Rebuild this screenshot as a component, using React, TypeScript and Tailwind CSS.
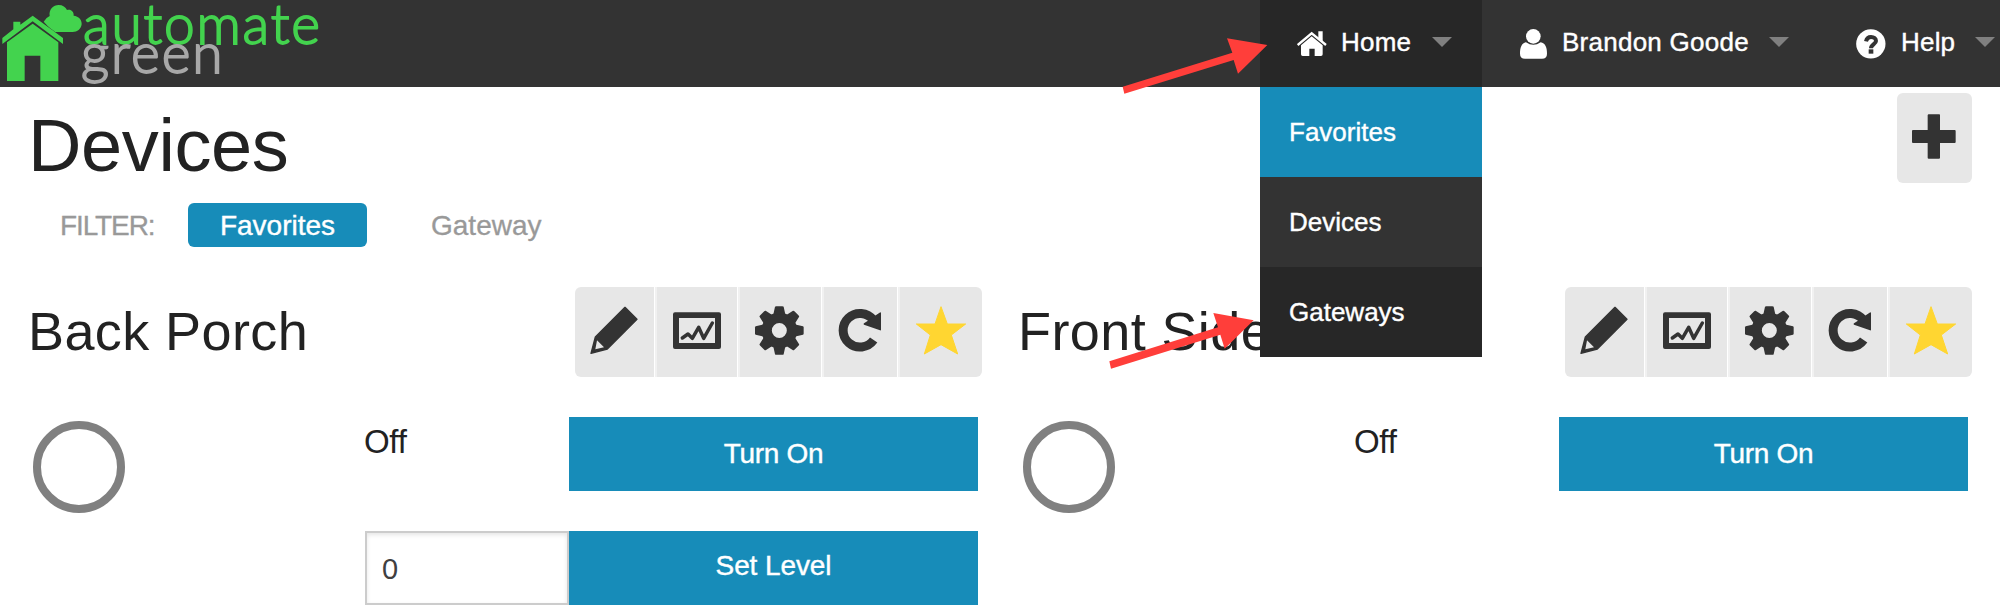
import type { ReactNode } from "react";

function Caret() {
  return (
    <svg className="block h-[10px] w-5 shrink-0" viewBox="0 0 20 10">
      <path d="M0 0H20L10 10Z" fill="#808080" />
    </svg>
  );
}

function Logo() {
  return (
    <div className="flex h-[87px] w-[360px] shrink-0">
      <svg className="block h-[87px] w-[82px] shrink-0" viewBox="0 0 246 261" fill="#43d34e">
        <path d="M160 96L131 65Q136 54 149 48C146 28 160 15 176 15C188 15 197 21 201 30C212 26 222 34 221 47C236 49 246 59 245 73C243 88 232 96 218 96Z" />
        <path
          d="M7 114L40 88V65H61V74L98 47L189 114V132L98 64L7 132Z"
          stroke="#333"
          strokeWidth="2"
          paintOrder="stroke"
        />
        <path d="M98 71L175 127V243H121V167H74V243H21V127Z" />
      </svg>
      <div className="flex flex-col whitespace-nowrap font-[Lato,sans-serif] font-light">
        <span className="ml-[1px] mt-[-7px] h-[38px] text-[55px] leading-[60px] tracking-[1.8px] text-[#43d34e] [-webkit-text-stroke:1.8px_#43d34e]">
          automate
        </span>
        <span className="ml-[-1px] mt-[-9px] text-[55px] leading-[60px] tracking-[2px] text-[#a8a8a8] [-webkit-text-stroke:1.8px_#a8a8a8]">
          green
        </span>
      </div>
    </div>
  );
}

function HomeIcon() {
  return (
    <svg className="block h-[26px] w-[30px]" viewBox="591 90 90 78" fill="#fff">
      <path d="M593 132L635 97L678 132" fill="none" stroke="#fff" strokeWidth="7" />
      <path d="M655 91H668V122L655 111Z" />
      <path d="M603 133L635 106L668 133V160Q668 165 663 165H644V143H628V165H608Q603 165 603 160Z" />
    </svg>
  );
}

function UserIcon() {
  return (
    <svg className="block h-[30px] w-[27px]" viewBox="60 84 81 90" fill="#fff">
      <circle cx="100" cy="106" r="22" />
      <path d="M78 124Q100 139 122 124C136 126 141 140 141 158Q141 173 126 173H75Q60 173 60 158C60 140 65 126 78 124Z" />
    </svg>
  );
}

function HelpIcon() {
  return (
    <svg className="block h-[30px] w-[30px]" viewBox="1067 84 90 90">
      <circle cx="1111.500" cy="128.500" r="44" fill="#fff" />
      <path
        d="M1097 121C1099 112 1104 108 1112 108C1121 108 1127 113 1127 120C1127 129 1112 130 1112 142"
        fill="none"
        stroke="#333"
        strokeWidth="12"
      />
      <path d="M1105 145H1119V158H1105Z" fill="#333" />
    </svg>
  );
}

function MenuItem({ tone, children }: { tone: string; children: ReactNode }) {
  return (
    <a className={`flex h-[90px] items-center pl-[29px] text-[26px] text-white ${tone}`}>{children}</a>
  );
}

function Header() {
  return (
    <header className="flex h-[87px] bg-[#333] text-[26px] text-white">
      <Logo />
      <nav className="ml-[900px] flex h-[87px] whitespace-nowrap [-webkit-text-stroke:0.4px_#fff]">
        <div className="relative flex h-[87px] w-[222px] items-center bg-[#272727] pl-[37px]">
          <HomeIcon />
          <span className="ml-[14px] w-[91px] pb-[3px] tracking-[0.2px]">Home</span>
          <div className="pb-[3px]">
            <Caret />
          </div>
          <div className="absolute left-0 top-[87px] z-10 w-[222px]">
            <MenuItem tone="bg-[#178cb9]">Favorites</MenuItem>
            <MenuItem tone="bg-[#333]">Devices</MenuItem>
            <MenuItem tone="bg-[#272727]">Gateways</MenuItem>
          </div>
        </div>
        <div className="flex h-[87px] items-center pl-[38px]">
          <UserIcon />
          <span className="ml-[15px] w-[207px] pb-[3px] tracking-[0.25px]">Brandon Goode</span>
          <div className="pb-[3px]">
            <Caret />
          </div>
        </div>
        <div className="flex h-[87px] items-center pl-[67px]">
          <HelpIcon />
          <span className="ml-[15px] w-[74px] pb-[3px] tracking-[0.2px]">Help</span>
          <div className="pb-[3px]">
            <Caret />
          </div>
        </div>
      </nav>
    </header>
  );
}

const TEETH = [0, 45, 90, 135, 180, 225, 270, 315];

function Toolbar() {
  return (
    <div className="flex h-[90px] w-[407px] shrink-0 gap-px overflow-hidden rounded-[6px]">
      <button className="w-[79px] bg-[#e7e7e7]">
        <svg className="block h-[90px] w-[79px]" viewBox="45 51 237 270">
          <path
            d="M195 112L231 148L142 237L93 250L106 201Z"
            fill="#333"
            stroke="#333"
            strokeWidth="4"
            strokeLinejoin="round"
          />
          <path d="M111 211L132 232L106 238Z" fill="#e7e7e7" />
        </svg>
      </button>
      <button className="w-[82px] bg-[#e7e7e7] shadow-[inset_2px_0_0_#f1f1f1]">
        <svg className="block h-[90px] w-[82px]" viewBox="285 51 246 270">
          <path
            d="M345 127H477Q483 127 483 133V231Q483 237 477 237H345Q339 237 339 231V133Q339 127 345 127ZM357 144V219H465V144Z"
            fill="#333"
            fillRule="evenodd"
          />
          <path
            d="M367 204L384 192L397 205L416 172L431 205L457 159"
            fill="none"
            stroke="#333"
            strokeWidth="10.500"
            strokeLinecap="round"
            strokeLinejoin="round"
          />
        </svg>
      </button>
      <button className="w-[83px] bg-[#e7e7e7] shadow-[inset_2px_0_0_#f1f1f1]">
        <svg className="block h-[90px] w-[83px]" viewBox="534 51 249 270">
          <circle cx="658" cy="181.500" r="38" fill="none" stroke="#333" strokeWidth="31" />
          {TEETH.map((a) => (
            <path
              key={a}
              d="M-18 -48L-13 -71Q-12 -73 -9 -73H9Q12 -73 13 -71L18 -48Z"
              fill="#333"
              transform={`translate(658 181.500) rotate(${a})`}
            />
          ))}
        </svg>
      </button>
      <button className="w-[75px] bg-[#e7e7e7] shadow-[inset_2px_0_0_#f1f1f1]">
        <svg className="block h-[90px] w-[75px]" viewBox="786 51 225 270">
          <path d="M941 210A50.500 50.500 0 1 1 940 150" fill="none" stroke="#333" strokeWidth="27" />
          <path d="M945 137L961 127Q963 127 963 130V179Q963 182 960 181L912 164Q909 162 912 160L926 151Z" fill="#333" />
        </svg>
      </button>
      <button className="w-[84px] bg-[#e7e7e7] shadow-[inset_2px_0_0_#f1f1f1]">
        <svg className="block h-[90px] w-[84px]" viewBox="1014 51 252 270">
          <path
            d="M1143 110L1162 162H1217L1174 195L1193 252L1143 224L1093 252L1111 195L1069 162H1125Z"
            fill="#ffd631"
            stroke="#ffd631"
            strokeWidth="3"
            strokeLinejoin="round"
          />
        </svg>
      </button>
    </div>
  );
}

function Device({ name, dimmable }: { name: string; dimmable?: boolean }) {
  return (
    <section className="w-[990px] shrink-0">
      <div className="flex h-[90px] w-[954px] items-center justify-between">
        <h2 className="whitespace-nowrap pb-[3px] text-[54px] leading-none tracking-[0.4px]">{name}</h2>
        <Toolbar />
      </div>
      <div className="mt-10 flex">
        <div className="ml-[5px] mt-1 size-[92px] rounded-full border-8 border-[#808080]" />
        <div className="ml-[240px]">
          <div className="flex h-[74px]">
            <span className="-ml-px w-[205px] text-[33px] leading-[49px] tracking-[-0.3px]">Off</span>
            <button className="w-[409px] bg-[#178cb9] text-[28px] tracking-[-0.3px] text-white [-webkit-text-stroke:0.4px_#fff]">
              Turn On
            </button>
          </div>
          {dimmable && (
            <div className="mt-10 flex h-[74px]">
              <input
                className="w-[204px] border-2 border-[#ccc] px-[15px] pt-[3px] text-[29px] text-[#404040] shadow-[inset_0_2px_4px_rgba(0,0,0,0.1)]"
                defaultValue="0"
              />
              <button className="w-[409px] bg-[#178cb9] pb-[5px] text-[28px] tracking-[-0.1px] text-white [-webkit-text-stroke:0.4px_#fff]">
                Set Level
              </button>
            </div>
          )}
        </div>
      </div>
    </section>
  );
}

function Arrows() {
  return (
    <svg className="pointer-events-none absolute left-[1100px] top-0 z-20 h-[400px] w-[200px]" viewBox="0 0 600 1200" fill="#ff3e3a">
      <path d="M68 260L397 158L381 115L502 135L414 221L401 180L73 281Z" />
      <path d="M28 1084L354 982L340 939L461 961L374 1046L361 1004L33 1106Z" />
    </svg>
  );
}

export default function App() {
  return (
    <div className="relative h-[614px] w-[2000px] overflow-hidden bg-white font-['Liberation_Sans',Arial,sans-serif] text-[#222]">
      <Header />
      <main className="pl-7">
        <div className="flex h-[116px] justify-between pr-7">
          <h1 className="pt-[22px] text-[74px] leading-[74px] tracking-[-0.4px]">Devices</h1>
          <button className="mt-1.5 h-[90px] w-[75px] rounded-[6px] bg-[#e7e7e7]">
            <svg className="block h-[90px] w-[75px]" viewBox="1191 279 225 270">
              <path
                d="M1285 343H1318Q1320 343 1320 346V390H1364Q1367 390 1367 393V426Q1367 429 1364 429H1320V473Q1320 476 1317 476H1286Q1283 476 1283 473V429H1239Q1236 429 1236 426V393Q1236 390 1239 390H1283V345Z"
                fill="#333"
              />
            </svg>
          </button>
        </div>
        <div className="flex h-[44px] text-[28px] leading-[45px] text-[#999]">
          <span className="ml-8 w-[128px] tracking-[-1.1px] [-webkit-text-stroke:0.3px_#999]">FILTER:</span>
          <span className="w-[179px] rounded-[6px] bg-[#178cb9] text-center text-white [-webkit-text-stroke:0.4px_#fff]">
            Favorites
          </span>
          <span className="ml-[64px] [-webkit-text-stroke:0.3px_#999]">Gateway</span>
        </div>
        <div className="mt-10 flex">
          <Device name="Back Porch" dimmable />
          <Device name="Front Side" />
        </div>
      </main>
      <Arrows />
    </div>
  );
}
